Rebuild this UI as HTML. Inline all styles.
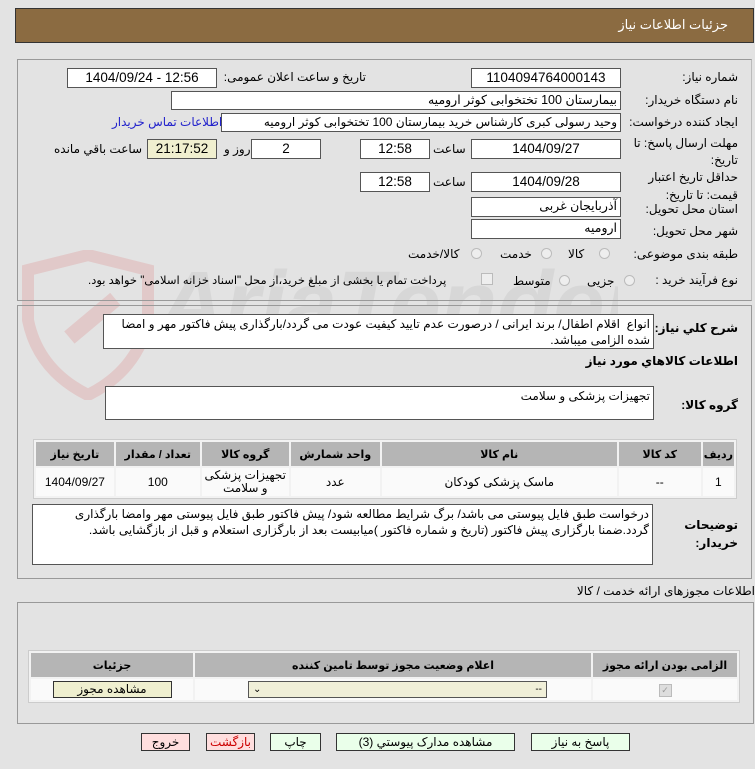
<!DOCTYPE html>
<html><head><meta charset="utf-8"><style>
body{margin:0;width:755px;height:769px;background:#e3e3e3;font-family:"Liberation Sans","DejaVu Sans",sans-serif;font-size:12px;color:#000;position:relative;overflow:hidden}
.a{position:absolute}
.box{position:absolute;background:#fff;border:1px solid #555;box-sizing:border-box;text-align:center;line-height:17px;font-size:13.5px}
.r{direction:rtl;text-align:right;padding-right:3px}
.lab{position:absolute;direction:rtl;text-align:right;white-space:nowrap;font-size:12px;line-height:16px}
.rad{position:absolute;width:11px;height:11px;border-radius:50%;border:1px solid #bbb;background:#eee;box-sizing:border-box}
table{border-collapse:separate;border-spacing:2px;position:absolute;background:#f2f2f2;border:1px solid #ccc;direction:rtl}
th{background:#b5b5b5;font-weight:bold;font-size:11px;height:22px}
td{background:#fafafa;text-align:center;font-size:12px}
.btn{position:absolute;height:18px;border:1px solid #333;box-sizing:border-box;text-align:center;line-height:16px;font-size:12px;direction:rtl}
</style></head><body>
<div class="a" style="left:15px;top:8px;width:739px;height:35px;background:#8b6b41;border:1px solid #333;box-sizing:border-box"></div>
<div class="lab" style="right:27px;top:17px;color:#fff;font-size:13px">جزئیات اطلاعات نیاز</div>

<!-- watermark -->
<svg class="a" style="left:18px;top:250px;opacity:0.55" width="600" height="150">
<path d="M10 20 L70 5 L130 20 L130 70 Q120 120 70 145 Q20 120 10 70 Z" fill="none" stroke="#e0b4b4" stroke-width="12"/>
<rect x="45" y="60" width="60" height="16" fill="#e0b4b4" transform="rotate(-40 75 69)"/>
<text x="140" y="85" font-family="Liberation Sans" font-size="92" font-weight="bold" fill="#cfcfcf" font-style="italic">AriaTender.net</text>
</svg>

<div class="a" style="left:17px;top:59px;width:733px;height:240px;border:1px solid #999;border-right-color:#bbb"></div>
<div class="a" style="left:17px;top:305px;width:733px;height:272px;border:1px solid #999"></div>

<div class="lab" style="right:17px;top:69px">شماره نیاز:</div>
<div class="box" style="left:471px;top:68px;width:150px;height:20px">1104094764000143</div>
<div class="lab" style="right:389px;top:69px">تاریخ و ساعت اعلان عمومی:</div>
<div class="box" style="left:67px;top:68px;width:150px;height:20px">1404/09/24 - 12:56</div>

<div class="lab" style="right:17px;top:92px">نام دستگاه خریدار:</div>
<div class="box r" style="left:171px;top:91px;width:450px;height:19px;font-size:12.5px">بیمارستان 100 تختخوابی کوثر ارومیه</div>

<div class="lab" style="right:17px;top:114px">ایجاد کننده درخواست:</div>
<div class="box r" style="left:221px;top:113px;width:400px;height:19px;font-size:12px">وحید رسولی کبری کارشناس خرید بیمارستان 100 تختخوابی کوثر ارومیه</div>
<div class="lab" style="left:112px;top:114px;color:#2222cc">اطلاعات تماس خریدار</div>

<div class="lab" style="right:17px;top:135px;line-height:17px">مهلت ارسال پاسخ: تا<br>تاریخ:</div>
<div class="box" style="left:471px;top:139px;width:150px;height:20px">1404/09/27</div>
<div class="lab" style="left:433px;top:141px">ساعت</div>
<div class="box" style="left:360px;top:139px;width:70px;height:20px">12:58</div>
<div class="box" style="left:251px;top:139px;width:70px;height:20px">2</div>
<div class="lab" style="left:224px;top:141px">روز و</div>
<div class="box" style="left:147px;top:139px;width:70px;height:20px;background:#f0efcf">21:17:52</div>
<div class="lab" style="left:54px;top:141px">ساعت باقي مانده</div>

<div class="lab" style="right:17px;top:168px;line-height:18px">حداقل تاریخ اعتبار<br>قیمت: تا تاریخ:</div>
<div class="box" style="left:471px;top:172px;width:150px;height:20px">1404/09/28</div>
<div class="lab" style="left:433px;top:174px">ساعت</div>
<div class="box" style="left:360px;top:172px;width:70px;height:20px">12:58</div>

<div class="lab" style="right:17px;top:201px">استان محل تحویل:</div>
<div class="box r" style="left:471px;top:197px;width:150px;height:20px;font-size:12.5px">آذربایجان غربی</div>
<div class="lab" style="right:17px;top:223px">شهر محل تحویل:</div>
<div class="box r" style="left:471px;top:219px;width:150px;height:20px;font-size:12.5px">ارومیه</div>

<div class="lab" style="right:17px;top:246px">طبقه بندی موضوعی:</div>
<div class="rad" style="left:599px;top:248px"></div><div class="lab" style="left:568px;top:246px">کالا</div>
<div class="rad" style="left:541px;top:248px"></div><div class="lab" style="left:500px;top:246px">خدمت</div>
<div class="rad" style="left:471px;top:248px"></div><div class="lab" style="left:408px;top:246px">کالا/خدمت</div>

<div class="lab" style="right:17px;top:272px">نوع فرآیند خرید :</div>
<div class="rad" style="left:624px;top:275px"></div><div class="lab" style="left:587px;top:273px">جزیی</div>
<div class="rad" style="left:559px;top:275px"></div><div class="lab" style="left:513px;top:273px">متوسط</div>
<div class="a" style="left:481px;top:273px;width:12px;height:12px;border:1px solid #bbb;background:#eee;box-sizing:border-box"></div>
<div class="lab" style="left:88px;top:273px;font-size:11.5px">پرداخت تمام یا بخشی از مبلغ خرید،از محل "اسناد خزانه اسلامی" خواهد بود.</div>

<div class="lab" style="right:17px;top:320px;font-weight:bold">شرح کلي نياز:</div>
<div class="box r" style="left:103px;top:314px;width:551px;height:35px;font-size:12px;text-align:right;line-height:16px;padding:1px 3px">انواع &nbsp;اقلام اطفال/ برند ایرانی / درصورت عدم تایید کیفیت عودت می گردد/بارگذاری پیش فاکتور مهر و امضا شده الزامی میباشد.</div>
<div class="lab" style="right:17px;top:353px;font-weight:bold">اطلاعات کالاهاي مورد نياز</div>

<div class="lab" style="right:17px;top:397px;font-weight:bold">گروه کالا:</div>
<div class="box r" style="left:105px;top:386px;width:549px;height:34px;font-size:12px;text-align:right;padding-top:1px">تجهیزات پزشکی و سلامت</div>

<table style="left:33px;top:439px;width:704px">
<tr><th style="width:26px">ردیف</th><th style="width:80px">کد کالا</th><th style="width:233px">نام کالا</th><th style="width:87px">واحد شمارش</th><th style="width:85px">گروه کالا</th><th style="width:82px">تعداد / مقدار</th><th>تاریخ نیاز</th></tr>
<tr style="height:28px"><td>1</td><td>--</td><td>ماسک پزشکی کودکان</td><td>عدد</td><td style="line-height:13px">تجهیزات پزشکی و سلامت</td><td>100</td><td>1404/09/27</td></tr>
</table>

<div class="lab" style="right:17px;top:516px;font-weight:bold;line-height:18px">توضیحات<br>خریدار:</div>
<div class="box r" style="left:32px;top:504px;width:621px;height:61px;font-size:12px;text-align:right;line-height:16px;padding:1px 3px">درخواست طبق فایل پیوستی می باشد/ برگ شرایط مطالعه شود/ پیش فاکتور طبق فایل پیوستی مهر وامضا بارگذاری گردد.ضمنا بارگزاری پیش فاکتور (تاریخ و شماره فاکتور )میابیست بعد از بارگزاری استعلام و قبل از بازگشایی باشد.</div>

<div class="lab" style="right:0px;top:583px">اطلاعات مجوزهای ارائه خدمت / کالا</div>
<div class="a" style="left:17px;top:602px;width:737px;height:122px;border:1px solid #999;box-sizing:border-box"></div>
<table style="left:28px;top:650px;width:712px">
<tr><th style="width:142px">الزامی بودن ارائه مجوز</th><th>اعلام وضعیت مجوز توسط تامین کننده</th><th style="width:160px">جزئیات</th></tr>
<tr style="height:21px"><td><span style="display:inline-block;width:11px;height:11px;background:#ddd;border:1px solid #bbb;color:#999;font-size:9px;line-height:11px">✓</span></td>
<td><div style="margin:0 auto 0 52px;width:299px;height:17px;background:#f0efd8;border:1px solid #555;box-sizing:border-box;display:flex;justify-content:space-between;font-size:10px;line-height:15px;padding:0 4px;direction:rtl"><span>--</span><span>⌄</span></div></td>
<td><div style="margin:0 auto;width:119px;height:17px;background:#efefcf;border:1px solid #333;box-sizing:border-box;line-height:15px">مشاهده مجوز</div></td></tr>
</table>

<div class="btn" style="left:531px;top:733px;width:99px;background:#eaffea">پاسخ به نیاز</div>
<div class="btn" style="left:336px;top:733px;width:179px;background:#eaffea">مشاهده مدارک پیوستي (3)</div>
<div class="btn" style="left:270px;top:733px;width:51px;background:#eaffea">چاپ</div>
<div class="btn" style="left:206px;top:733px;width:49px;background:#ffdede;color:#c00">بازگشت</div>
<div class="btn" style="left:141px;top:733px;width:49px;background:#ffdede">خروج</div>
</body></html>
